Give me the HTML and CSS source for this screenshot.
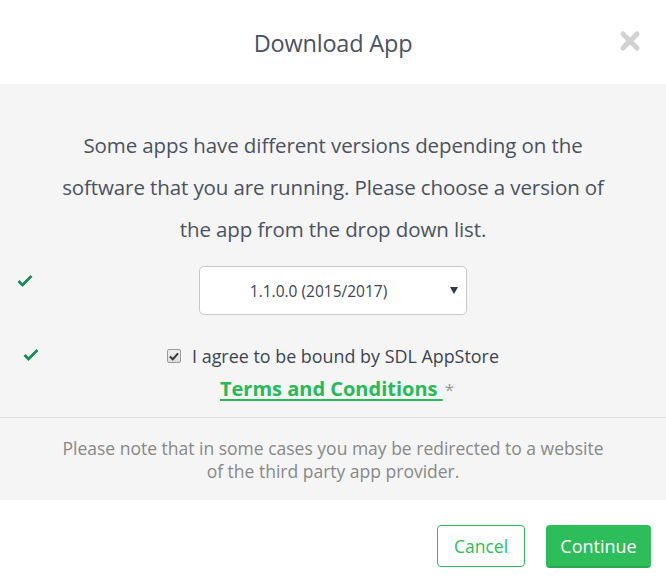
FILE: index.html
```html
<!DOCTYPE html>
<html>
<head>
<meta charset="utf-8">
<link rel="stylesheet" href="styles.css">
</head>
<body>
<div class="modal">
  <div class="modal-header">
    <span></span>
    <h1 class="title">Download App</h1>
    <button class="close" aria-label="Close">
      <svg width="22" height="22" viewBox="0 0 22 22"><path d="M4 4L18 18M18 4L4 18" stroke="#d2d2d2" stroke-width="5" stroke-linecap="round"/></svg>
    </button>
  </div>
  <div class="modal-body">
    <p class="intro">Some apps have different versions depending on the software that you are running. Please choose a version of the app from the drop down list.</p>
    <div class="row row-select">
      <span class="ok ok-1"><svg width="16" height="13" viewBox="0 0 16 13"><path d="M1.5 7L5.5 11L14.5 2" fill="none" stroke="#1b8a5e" stroke-width="2.8"/></svg></span>
      <div class="select">
        <span class="select-value">1.1.0.0 (2015/2017)</span>
        <span class="caret"></span>
      </div>
      <span></span>
    </div>
    <div class="row row-agree">
      <span class="ok ok-2"><svg width="16" height="13" viewBox="0 0 16 13"><path d="M1.5 7L5.5 11L14.5 2" fill="none" stroke="#1b8a5e" stroke-width="2.8"/></svg></span>
      <label class="agree"><span class="cb"><svg width="10" height="9" viewBox="0 0 10 9"><path d="M1 4.5L3.8 7.3L9 1.3" fill="none" stroke="#333" stroke-width="2"/></svg></span>I agree to be bound by SDL AppStore</label>
      <span></span>
    </div>
    <div class="terms"><a href="#">Terms and Conditions </a><span class="star">*</span></div>
    <div class="note">Please note that in some cases you may be redirected to a website<br>of the third party app provider.</div>
  </div>
  <div class="modal-footer">
    <button class="btn btn-cancel">Cancel</button>
    <button class="btn btn-continue">Continue</button>
  </div>
</div>
</body>
</html>
```
FILE: styles.css
```css
html, body { margin: 0; padding: 0; background: #fff; }
body { font-family: "Open Sans", "Noto Sans", sans-serif; color: #4a5262; }
.modal { width: 666px; height: 585px; display: flex; flex-direction: column; }
.modal-header {
  height: 84px; display: grid; grid-template-columns: 1fr auto 1fr; align-items: center;
}
.title { margin: 0; font-weight: 400; font-size: 23.5px; color: #4a5262; letter-spacing: -0.2px; padding-top: 2px; }
.close {
  justify-self: end; margin-right: 25px; margin-top: -2px; background: none; border: 0; padding: 0; width: 22px; height: 22px; display: flex;
}
.modal-body { background: #f5f5f5; height: 416px; padding-top: 40px; box-sizing: border-box; }
.intro {
  margin: 0 auto; width: 545px; text-align: center; font-size: 20.5px; line-height: 42px; letter-spacing: -0.1px;
}
.row { display: grid; grid-template-columns: 1fr auto 1fr; align-items: center; }
.row-select { margin-top: 16px; }
.ok { display: flex; }
.ok-1 { padding-left: 17px; margin-top: -20px; }
.ok-2 { padding-left: 23px; margin-top: -4px; }
.select {
  width: 268px; height: 49px; box-sizing: border-box; background: #fff; border: 1px solid #c8c8c8; border-radius: 5px;
  display: flex; align-items: center; justify-content: center; position: relative;
}
.select-value { font-size: 15.5px; color: #3c4452; margin-right: 29px; }
.caret {
  position: absolute; right: 8px; top: 20px; width: 0; height: 0;
  border-left: 4px solid transparent; border-right: 4px solid transparent; border-top: 7px solid #2e3848;
}
.row-agree { margin-top: 29px; }
.agree { display: flex; align-items: center; font-size: 17.9px; color: #3c4452; }
.cb {
  width: 12px; height: 12px; border: 1px solid #9a9a9a; border-radius: 2px; background: linear-gradient(#eee, #dcdcdc);
  display: flex; align-items: center; justify-content: center; margin-right: 11px;
}
.terms { text-align: center; margin-top: 7px; line-height: 28px; padding-left: 8px; }
.terms a { color: #27ba58; font-weight: 700; font-size: 20px; text-decoration: underline; text-decoration-thickness: 2px; text-underline-offset: 3px; }
.star { color: #999; font-size: 17px; margin-left: 2px; }
.note {
  margin-top: 13px; border-top: 1px solid #dedede; padding-top: 19px; text-align: center;
  font-size: 17.5px; line-height: 23px; color: #888; letter-spacing: 0;
}
.modal-footer { flex: 1; display: flex; justify-content: flex-end; align-items: flex-start; padding: 25px 15px 0 0; gap: 21px; }
.btn { font-family: inherit; font-size: 17.5px; height: 42px; border-radius: 4px; cursor: pointer; }
.btn-cancel { width: 88px; background: #fff; border: 1px solid #2dbd5a; color: #2dbd5a; }
.btn-continue { width: 105px; background: #2dbd5a; border: 0; border-bottom: 2px solid #25a84e; color: #fff; height: 43px; font-size: 18px; }
```
